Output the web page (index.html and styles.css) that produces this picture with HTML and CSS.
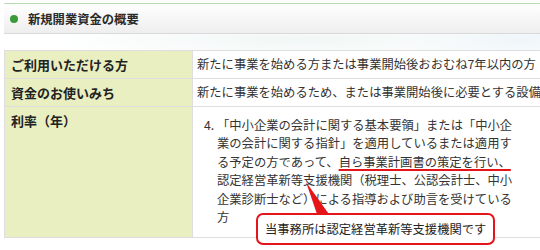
FILE: index.html
```html
<!DOCTYPE html>
<html lang="ja">
<head>
<meta charset="utf-8">
<link rel="stylesheet" href="styles.css">
</head>
<body>
<div class="page">
  <div class="heading">
    <span class="dot"></span>
    <h2 class="heading-title">新規開業資金の概要</h2>
  </div>
  <table class="overview">
    <colgroup><col class="col-label"><col class="col-value"></colgroup>
    <tr>
      <th>ご利用いただける方</th>
      <td>新たに事業を始める方または事業開始後おおむね7年以内の方</td>
    </tr>
    <tr>
      <th>資金のお使いみち</th>
      <td>新たに事業を始めるため、または事業開始後に必要とする設備資金および運転資金</td>
    </tr>
    <tr>
      <th class="top">利率（年）</th>
      <td class="rate">
        <ol class="rate-list" start="4">
          <li>「中小企業の会計に関する基本要領」または「中小企業の会計に関する指針」を適用しているまたは適用する予定の方であって、<span class="mark">自ら事業計画書の策定を行い、</span>認定経営革新等支援機関（税理士、公認会計士、中小企業診断士など）による指導および助言を受けている方</li>
        </ol>
        <svg class="tail" width="50" height="50" viewBox="0 0 50 50"><polygon points="13,5 25,40 38,40" fill="#e5141b"/></svg>
        <div class="callout">当事務所は認定経営革新等支援機関です</div>
      </td>
    </tr>
  </table>
</div>
</body>
</html>
```
FILE: styles.css
```css
html, body {
  margin: 0;
  padding: 0;
  overflow: hidden;
}
body {
  width: 540px;
  height: 250px;
  font-family: "Noto Sans CJK JP", "Noto Sans", sans-serif;
  color: #333;
  background:
    radial-gradient(ellipse 260px 22px at 300px 40px, #f1f7f6 0%, rgba(255,255,255,0) 100%),
    radial-gradient(ellipse 120px 26px at 520px 40px, #eef5fa 0%, rgba(255,255,255,0) 100%),
    #fff;
}
.page {
  padding: 3px 0 0 4px;
}
.heading {
  display: flex;
  align-items: center;
  height: 29px;
  border-top: 1px solid #b9dcb4;
  border-bottom: 1px solid #d9d9d9;
  background: linear-gradient(#ffffff, #eeeeee);
  width: 600px;
}
.dot {
  width: 8px;
  height: 8px;
  border-radius: 50%;
  background: #3a9a3a;
  margin-left: 6px;
  margin-right: 10px;
  flex: none;
}
.heading-title {
  margin: 0;
  font-size: 12.3px;
  font-weight: bold;
  color: #2a2a2a;
}
.overview {
  margin-top: 16px;
  border-collapse: collapse;
  table-layout: fixed;
  width: 760px;
  background: #fff;
}
.col-label { width: 188px; }
.col-value { width: 572px; }
.overview th,
.overview td {
  border: 1px solid #dedede;
  padding: 4px 4px 4px 6px;
  line-height: 19px;
  text-align: left;
  white-space: nowrap;
}
.overview th {
  background: #e9efc0;
  font-size: 13px;
  font-weight: bold;
  color: #222;
  vertical-align: middle;
}
.overview th.top {
  vertical-align: top;
}
.overview td {
  font-size: 12.3px;
  padding-left: 4px;
}
.overview td.rate {
  position: relative;
  vertical-align: top;
  white-space: normal;
}
.rate-list {
  margin: 5px 0 7px;
  padding-left: 20px;
  width: 296px;
  line-height: 18.4px;
}
.mark {
  text-decoration: underline;
  text-decoration-color: #e5141b;
  text-decoration-thickness: 2px;
  text-underline-offset: 2px;
}
.tail {
  position: absolute;
  left: 100px;
  top: 70px;
  display: block;
}
.callout {
  position: absolute;
  left: 63px;
  top: 106px;
  width: 228px;
  height: 28px;
  border: 2px solid #e5141b;
  border-radius: 7px;
  background: #fff;
  display: flex;
  align-items: center;
  padding-left: 7px;
  box-sizing: content-box;
  font-size: 12.3px;
  color: #222;
  white-space: nowrap;
}
```
